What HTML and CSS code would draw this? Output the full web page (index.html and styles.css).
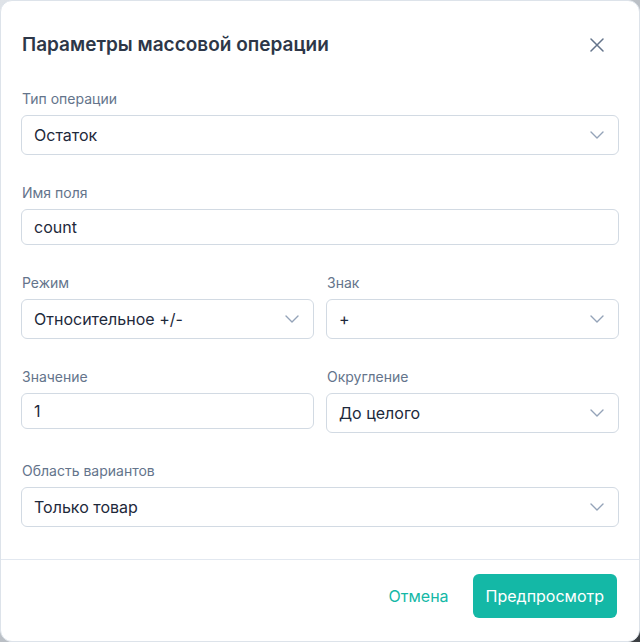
FILE: index.html
```html
<!DOCTYPE html>
<html lang="ru">
<head>
<meta charset="utf-8">
<title>Параметры массовой операции</title>
<link rel="stylesheet" href="styles.css">
</head>
<body>
<div class="modal">
  <div class="header">
    <h2 class="title">Параметры массовой операции</h2>
    <button class="close" aria-label="Закрыть">
      <svg width="14" height="14" viewBox="0 0 14 14"><path d="M1 1L13 13M13 1L1 13" stroke="currentColor" stroke-width="1.5" stroke-linecap="round" fill="none"/></svg>
    </button>
  </div>
  <div class="body">
    <div class="field">
      <label class="label">Тип операции</label>
      <div class="select"><span>Остаток</span><svg class="chev" width="14" height="8" viewBox="0 0 14 8"><path d="M1 1L7 7L13 1" stroke="currentColor" stroke-width="1.4" fill="none" stroke-linecap="round" stroke-linejoin="round"/></svg></div>
    </div>
    <div class="field">
      <label class="label">Имя поля</label>
      <div class="input">count</div>
    </div>
    <div class="row">
      <div class="field">
        <label class="label">Режим</label>
        <div class="select"><span>Относительное +/-</span><svg class="chev" width="14" height="8" viewBox="0 0 14 8"><path d="M1 1L7 7L13 1" stroke="currentColor" stroke-width="1.4" fill="none" stroke-linecap="round" stroke-linejoin="round"/></svg></div>
      </div>
      <div class="field">
        <label class="label">Знак</label>
        <div class="select"><span>+</span><svg class="chev" width="14" height="8" viewBox="0 0 14 8"><path d="M1 1L7 7L13 1" stroke="currentColor" stroke-width="1.4" fill="none" stroke-linecap="round" stroke-linejoin="round"/></svg></div>
      </div>
    </div>
    <div class="row">
      <div class="field">
        <label class="label">Значение</label>
        <div class="input">1</div>
      </div>
      <div class="field">
        <label class="label">Округление</label>
        <div class="select"><span>До целого</span><svg class="chev" width="14" height="8" viewBox="0 0 14 8"><path d="M1 1L7 7L13 1" stroke="currentColor" stroke-width="1.4" fill="none" stroke-linecap="round" stroke-linejoin="round"/></svg></div>
      </div>
    </div>
    <div class="field">
      <label class="label">Область вариантов</label>
      <div class="select"><span>Только товар</span><svg class="chev" width="14" height="8" viewBox="0 0 14 8"><path d="M1 1L7 7L13 1" stroke="currentColor" stroke-width="1.4" fill="none" stroke-linecap="round" stroke-linejoin="round"/></svg></div>
    </div>
  </div>
  <div class="footer">
    <button class="btn-ghost">Отмена</button>
    <button class="btn-primary">Предпросмотр</button>
  </div>
</div>
</body>
</html>
```
FILE: styles.css
```css
* { box-sizing: border-box; }
html, body { margin: 0; padding: 0; height: 100%; }
body {
  font-family: Inter, "Noto Sans", "Liberation Sans", sans-serif;
  background: linear-gradient(135deg, #dfe3e8 0%, #b7bcc2 55%, #3b3e42 100%);
  overflow: hidden;
}
.modal {
  width: 640px;
  height: 642px;
  background: #fff;
  border: 1px solid #dde3ea;
  border-radius: 12px;
  display: flex;
  flex-direction: column;
}
.header {
  display: flex;
  justify-content: space-between;
  padding: 30px 20px 0 20px;
  height: 88px;
  align-items: flex-start;
}
.title {
  margin: 0;
  font-size: 19px;
  line-height: 28px;
  font-weight: 600;
  color: #2d3748;
  padding-left: 1px;
}
.close {
  border: 0;
  background: none;
  padding: 0;
  margin: 7px 15px 0 0;
  color: #64748b;
  width: 14px;
  height: 14px;
  display: flex;
  cursor: pointer;
}
.body {
  padding: 0 20px;
  display: flex;
  flex-direction: column;
  gap: 28px;
  flex: 1;
}
.row {
  display: grid;
  grid-template-columns: 1fr 1fr;
  gap: 12px;
  align-items: start;
}
.field {
  display: flex;
  flex-direction: column;
  gap: 6px;
}
.label {
  font-size: 14px;
  line-height: 20px;
  color: #64748b;
  padding-left: 1px;
}
.select, .input {
  border: 1px solid #d2dae3;
  border-radius: 6px;
  padding: 0 14px 0 12px;
  font-size: 16px;
  color: #1e293b;
  display: flex;
  align-items: center;
  justify-content: space-between;
}
.select { height: 40px; }
.input { height: 36px; }
.chev { color: #94a3b8; }
.footer {
  border-top: 1px solid #e2e8f0;
  height: 82px;
  padding: 14px 22px 0 20px;
  display: flex;
  justify-content: flex-end;
  align-items: flex-start;
  gap: 8px;
}
.btn-ghost, .btn-primary {
  font-family: inherit;
  font-size: 16px;
  font-weight: 400;
  height: 44px;
  border-radius: 6px;
  border: 0;
  cursor: pointer;
}
.btn-ghost {
  background: none;
  color: #14b8a6;
  padding: 0 16px;
}
.btn-primary {
  background: #14b8a6;
  color: #fff;
  padding: 0 13px;
}
```
